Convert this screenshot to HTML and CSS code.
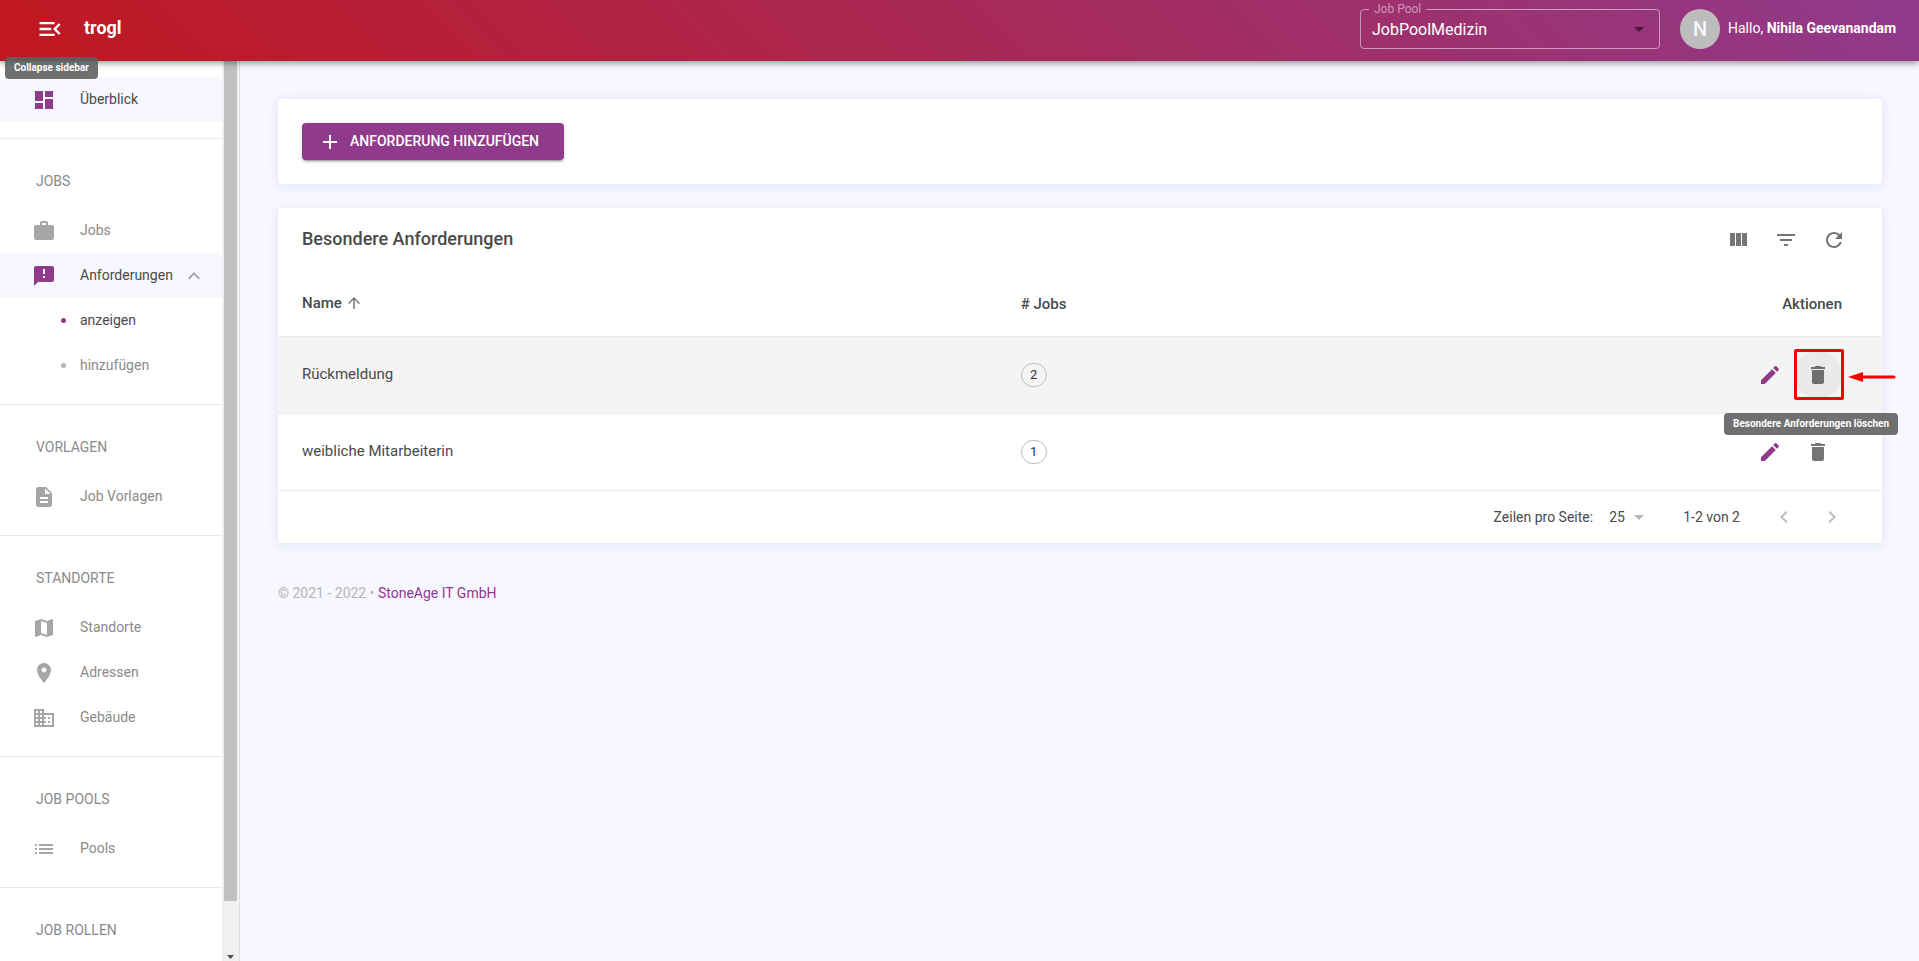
FILE: index.html
```html
<!DOCTYPE html>
<html lang="de">
<head>
<meta charset="utf-8">
<meta name="viewport" content="width=device-width, initial-scale=1">
<title>trogl – Besondere Anforderungen</title>
<link rel="stylesheet" href="styles.css">
</head>
<body>
<div class="app">
  <header class="topbar">
    <div class="menu-wrap">
      <button class="menu-btn" type="button" aria-label="Collapse sidebar">
        <svg viewBox="0 0 24 24" aria-hidden="true"><path d="M3 18h13v-2H3v2zm0-5h10v-2H3v2zm0-7v2h13V6H3zm18 9.590L17.420 12 21 8.410 19.590 7l-5 5 5 5L21 15.590z"/></svg>
      </button>
      <span class="tooltip tooltip-menu" role="tooltip">Collapse sidebar</span>
    </div>
    <a class="brand" href="#">trogl</a>
    <fieldset class="pool">
      <legend><label for="pool">Job Pool</label></legend>
      <select id="pool"><option>JobPoolMedizin</option></select>
      <svg class="caret" viewBox="0 0 24 24" aria-hidden="true"><path d="M7 10l5 5 5-5z"/></svg>
    </fieldset>
    <span class="avatar">N</span>
    <span class="greeting">Hallo, <b>Nihila Geevanandam</b></span>
  </header>

  <div class="body">
    <aside class="sidebar">
      <nav class="nav">
        <section class="group">
          <a class="item active" href="#"><svg viewBox="0 0 24 24" aria-hidden="true"><path d="M3 13h8V3H3v10zm0 8h8v-6H3v6zm10 0h8V11h-8v10zm0-18v6h8V3h-8z"/></svg>Überblick</a>
        </section>
        <section class="group">
          <h2 class="group-title">JOBS</h2>
          <a class="item" href="#"><svg viewBox="0 0 24 24" aria-hidden="true"><path d="M20 6h-4V4c0-1.110-.89-2-2-2h-4c-1.110 0-2 .89-2 2v2H4c-1.110 0-2 .89-2 2v11c0 1.110.89 2 2 2h16c1.110 0 2-.89 2-2V8c0-1.110-.89-2-2-2zm-6 0h-4V4h4v2z"/></svg>Jobs</a>
          <a class="item active" href="#"><svg viewBox="0 0 24 24" aria-hidden="true"><path d="M20 2H4c-1.100 0-1.990.9-1.990 2L2 22l4-4h14c1.100 0 2-.9 2-2V4c0-1.100-.9-2-2-2zm-7 12h-2v-2h2v2zm0-4h-2V5h2v5z"/></svg>Anforderungen
            <svg class="expand" viewBox="0 0 24 24" aria-hidden="true"><path d="M12 8l-6 6 1.410 1.410L12 10.830l4.590 4.580L18 14z"/></svg></a>
          <a class="item sub current" href="#"><span class="dot"></span>anzeigen</a>
          <a class="item sub" href="#"><span class="dot"></span>hinzufügen</a>
        </section>
        <section class="group">
          <h2 class="group-title">VORLAGEN</h2>
          <a class="item" href="#"><svg viewBox="0 0 24 24" aria-hidden="true"><path d="M14 2H6c-1.100 0-1.990.9-1.990 2L4 20c0 1.100.89 2 1.990 2H18c1.100 0 2-.9 2-2V8l-6-6zm2 16H8v-2h8v2zm0-4H8v-2h8v2zm-3-5V3.500L18.500 9H13z"/></svg>Job Vorlagen</a>
        </section>
        <section class="group">
          <h2 class="group-title">STANDORTE</h2>
          <a class="item" href="#"><svg viewBox="0 0 24 24" aria-hidden="true"><path d="M20.500 3l-.16.03L15 5.100 9 3 3.360 4.900c-.21.07-.36.25-.36.48V20.500c0 .28.22.5.5.5l.16-.03L9 18.900l6 2.100 5.640-1.900c.21-.07.36-.25.36-.48V3.500c0-.28-.22-.5-.5-.5zM15 19l-6-2.110V5l6 2.110V19z"/></svg>Standorte</a>
          <a class="item" href="#"><svg viewBox="0 0 24 24" aria-hidden="true"><path d="M12 2C8.130 2 5 5.130 5 9c0 5.250 7 13 7 13s7-7.750 7-13c0-3.870-3.130-7-7-7zm0 9.500c-1.380 0-2.500-1.120-2.500-2.500s1.120-2.500 2.500-2.500 2.500 1.120 2.500 2.500-1.120 2.500-2.500 2.500z"/></svg>Adressen</a>
          <a class="item" href="#"><svg viewBox="0 0 24 24" aria-hidden="true"><path d="M12 7V3H2v18h20V7H12zM6 19H4v-2h2v2zm0-4H4v-2h2v2zm0-4H4V9h2v2zm0-4H4V5h2v2zm4 12H8v-2h2v2zm0-4H8v-2h2v2zm0-4H8V9h2v2zm0-4H8V5h2v2zm10 12h-8v-2h2v-2h-2v-2h2v-2h-2V9h8v10zm-2-8h-2v2h2v-2zm0 4h-2v2h2v-2z"/></svg>Gebäude</a>
        </section>
        <section class="group">
          <h2 class="group-title">JOB POOLS</h2>
          <a class="item" href="#"><svg viewBox="0 0 24 24" aria-hidden="true"><path d="M3 13h2v-2H3v2zm0 4h2v-2H3v2zm0-8h2V7H3v2zm4 4h14v-2H7v2zm0 4h14v-2H7v2zM7 7v2h14V7H7z"/></svg>Pools</a>
        </section>
        <section class="group">
          <h2 class="group-title">JOB ROLLEN</h2>
        </section>
      </nav>
      <div class="scrollbar" aria-hidden="true"><div class="thumb"></div><svg viewBox="0 0 7 4" class="scroll-arrow"><path d="M0 0h7L3.500 4z"/></svg></div>
    </aside>

    <main class="main">
      <div class="card actions">
        <button class="add" type="button"><svg viewBox="0 0 24 24" aria-hidden="true"><path d="M19 13h-6v6h-2v-6H5v-2h6V5h2v6h6v2z"/></svg>ANFORDERUNG HINZUFÜGEN</button>
      </div>

      <section class="card">
        <div class="card-head">
          <h1>Besondere Anforderungen</h1>
          <button class="icon-btn" type="button" aria-label="Spalten"><svg viewBox="0 0 24 24" aria-hidden="true"><path d="M10 5h5v13h-5zM4 5h5v13H4zM16 5h5v13h-5z"/></svg></button>
          <button class="icon-btn" type="button" aria-label="Filter"><svg viewBox="0 0 24 24" aria-hidden="true"><path d="M10 18h4v-2h-4v2zM3 6v2h18V6H3zm3 7h12v-2H6v2z"/></svg></button>
          <button class="icon-btn" type="button" aria-label="Aktualisieren"><svg viewBox="0 0 24 24" aria-hidden="true"><path d="M17.650 6.350C16.200 4.900 14.210 4 12 4c-4.420 0-7.990 3.580-7.990 8s3.570 8 7.990 8c3.730 0 6.840-2.550 7.730-6h-2.080c-.82 2.330-3.040 4-5.650 4-3.310 0-6-2.690-6-6s2.690-6 6-6c1.660 0 3.140.69 4.220 1.780L13 11h7V4l-2.350 2.350z"/></svg></button>
        </div>
        <table class="table">
          <thead>
            <tr>
              <th class="col-name" scope="col"><span class="sort">Name <svg viewBox="0 0 24 24" aria-hidden="true"><path d="M4 12l1.410 1.410L11 7.830V20h2V7.830l5.580 5.590L20 12l-8-8-8 8z"/></svg></span></th>
              <th scope="col"># Jobs</th>
              <th class="col-actions" scope="col">Aktionen</th>
            </tr>
          </thead>
          <tbody>
            <tr class="hover">
              <td class="col-name">Rückmeldung</td>
              <td><span class="chip">2</span></td>
              <td class="col-actions"><div class="row-actions">
                <button class="icon-btn edit" type="button" aria-label="Bearbeiten"><svg viewBox="0 0 24 24" aria-hidden="true"><path d="M3 17.250V21h3.750L17.810 9.940l-3.750-3.750L3 17.250zM20.710 7.040c.39-.39.39-1.020 0-1.410l-2.340-2.340c-.39-.39-1.020-.39-1.410 0l-1.830 1.830 3.750 3.750 1.830-1.830z"/></svg></button>
                <div class="marked">
                  <button class="icon-btn focus" type="button" aria-label="Löschen"><svg viewBox="0 0 24 24" aria-hidden="true"><path d="M6 19c0 1.100.9 2 2 2h8c1.100 0 2-.9 2-2V7H6v12zM19 4h-3.500l-1-1h-5l-1 1H5v2h14V4z"/></svg></button>
                  <span class="mark-box"></span>
                  <svg class="mark-arrow" viewBox="0 0 48 10" aria-hidden="true"><path d="M0 5L15 0V10z"/><path d="M14 5H46" stroke="#f00" stroke-width="3" stroke-linecap="round"/></svg>
                  <span class="tooltip tooltip-delete" role="tooltip">Besondere Anforderungen löschen</span>
                </div>
              </div></td>
            </tr>
            <tr>
              <td class="col-name">weibliche Mitarbeiterin</td>
              <td><span class="chip">1</span></td>
              <td class="col-actions"><div class="row-actions">
                <button class="icon-btn edit" type="button" aria-label="Bearbeiten"><svg viewBox="0 0 24 24" aria-hidden="true"><path d="M3 17.250V21h3.750L17.810 9.940l-3.750-3.750L3 17.250zM20.710 7.040c.39-.39.39-1.020 0-1.410l-2.340-2.340c-.39-.39-1.020-.39-1.410 0l-1.830 1.830 3.750 3.750 1.830-1.830z"/></svg></button>
                <button class="icon-btn" type="button" aria-label="Löschen"><svg viewBox="0 0 24 24" aria-hidden="true"><path d="M6 19c0 1.100.9 2 2 2h8c1.100 0 2-.9 2-2V7H6v12zM19 4h-3.500l-1-1h-5l-1 1H5v2h14V4z"/></svg></button>
              </div></td>
            </tr>
          </tbody>
        </table>
        <div class="pager">
          <label for="rows">Zeilen pro Seite:</label>
          <span class="rows"><select id="rows"><option>25</option></select><svg viewBox="0 0 24 24" aria-hidden="true"><path d="M7 10l5 5 5-5z"/></svg></span>
          <span class="range">1-2 von 2</span>
          <button class="icon-btn" type="button" aria-label="Vorherige Seite" disabled><svg viewBox="0 0 24 24" aria-hidden="true"><path d="M15.410 7.410L14 6l-6 6 6 6 1.410-1.410L10.830 12z"/></svg></button>
          <button class="icon-btn" type="button" aria-label="Nächste Seite" disabled><svg viewBox="0 0 24 24" aria-hidden="true"><path d="M10 6L8.590 7.410 13.170 12l-4.580 4.590L10 18l6-6z"/></svg></button>
        </div>
      </section>

      <footer class="foot">© 2021 - 2022 • <a href="#">StoneAge IT GmbH</a></footer>
    </main>
  </div>
</div>
</body>
</html>
```
FILE: styles.css
```css
* { box-sizing: border-box; }

:root {
  --purple: #903a8c;
  --text: #4a4a4a;
  --muted: #8a8a8a;
  --icon: #757575;
  --line: #ebebeb;
  --page: #f6f7ff;
}

body {
  margin: 0;
  background: var(--page);
  color: var(--text);
  font: 14px/20px Roboto, "Noto Sans", sans-serif;
}

button, select { font: inherit; color: inherit; border: 0; margin: 0; }
a { color: inherit; text-decoration: none; }
svg { display: block; fill: currentColor; flex: none; }

.app { height: 100vh; display: flex; flex-direction: column; overflow: hidden; }

/* Top bar */
.topbar {
  position: relative;
  z-index: 2;
  flex: none;
  display: flex;
  align-items: center;
  height: 61px;
  padding: 0 18px 4px 36px;
  color: #fff;
  background: linear-gradient(45deg, #c1171f, #903a8c);
  box-shadow: 0 2px 4px -1px rgba(0,0,0,.2), 0 4px 5px rgba(0,0,0,.14), 0 1px 10px rgba(0,0,0,.12);
}
.menu-wrap { position: relative; }
.menu-btn { display: block; padding: 0; background: none; }
.menu-btn svg { width: 28px; height: 28px; }
.brand { margin-left: 20px; padding-bottom: 2px; font-size: 18px; line-height: 24px; font-weight: 700; }
.pool {
  position: relative;
  flex: none;
  width: 300px;
  height: 46px;
  margin: 0 20px 5px auto;
  padding: 0;
  border: 1px solid rgba(255,255,255,.5);
  border-radius: 4px;
}
.pool legend {
  margin-left: 8px;
  padding: 0 5px;
  font-size: 12px;
  line-height: 12px;
  color: rgba(255,255,255,.5);
}
.pool select {
  display: block;
  width: 100%;
  height: 30px;
  padding: 0 40px 0 11px;
  appearance: none;
  background: none;
  font-size: 16px;
}
.caret { position: absolute; right: 8px; top: 2px; width: 24px; height: 24px; color: rgba(0,0,0,.54); pointer-events: none; }
.avatar {
  width: 40px;
  height: 40px;
  margin-right: 8px;
  border-radius: 50%;
  background: #bdbdbd;
  color: #f6f7ff;
  font-size: 20px;
  line-height: 40px;
  font-weight: 500;
  text-align: center;
}
.greeting { min-width: 173px; padding-bottom: 2px; }
.greeting b { font-weight: 700; }

.tooltip {
  position: absolute;
  padding: 4px 9px;
  border-radius: 4px;
  background: rgba(97,97,97,.9);
  color: #fff;
  font-size: 10px;
  line-height: 14px;
  font-weight: 700;
  white-space: nowrap;
}
.tooltip-menu { left: -31px; top: 42px; }
.tooltip-delete { right: -56px; top: 62px; z-index: 1; }

/* Sidebar */
.body { flex: 1; min-height: 0; display: flex; }
.sidebar { flex: none; width: 240px; display: flex; background: #fff; border-right: 1px solid #e0e0e0; overflow: hidden; }
.nav { flex: 1; min-width: 0; overflow: hidden; }
.group { padding: 16px 0; border-bottom: 1px solid #e8e8e8; }
.group-title { margin: 0; padding: 0 36px; font-size: 14px; line-height: 53px; font-weight: 400; color: var(--muted); }
.item { display: flex; align-items: center; height: 45px; padding: 0 16px 2px 32px; color: var(--muted); }
.item svg { width: 24px; height: 24px; margin: 2px 24px 0 0; color: #a6a6a6; }
.item.active { background: var(--page); color: var(--text); }
.item.active svg { color: var(--purple); }
.item svg.expand { margin: 2px 0 0 auto; }
.item.active svg.expand { color: #a6a6a6; }
.item.sub { padding-left: 61px; }
.dot { width: 5px; height: 5px; margin: 2px 14px 0 0; border-radius: 50%; background: #b5b5b5; }
.current { color: var(--text); }
.current .dot { background: var(--purple); }
.scrollbar { flex: none; width: 17px; padding: 0 2px 2px; display: flex; flex-direction: column; align-items: center; justify-content: space-between; background: #f1f1f1; }
.thumb { width: 13px; height: calc(100% - 58px); background: #c1c1c1; }
.scroll-arrow { width: 7px; height: 4px; color: #505050; }

/* Content */
.main { flex: 1; min-width: 0; padding: 38px 37px 0 38px; overflow: hidden; }
.card { margin-bottom: 24px; border-radius: 4px; background: #fff; box-shadow: 0 2px 12px rgba(80,80,220,.12); }
.actions { padding: 24px; }
.add {
  display: flex;
  align-items: center;
  gap: 8px;
  min-width: 262px;
  height: 37px;
  padding: 0 16px 2px;
  border-radius: 4px;
  background: var(--purple);
  color: #fff;
  font-weight: 500;
  box-shadow: 0 3px 1px -2px rgba(0,0,0,.2), 0 2px 2px rgba(0,0,0,.14), 0 1px 5px rgba(0,0,0,.12);
}
.add svg { width: 24px; height: 24px; margin-top: 2px; }
.card-head { display: flex; align-items: center; height: 64px; padding: 0 24px; }
.card-head h1 { flex: 1; margin: 0; padding-bottom: 2px; font-size: 18px; line-height: 24px; font-weight: 500; }
.icon-btn {
  display: flex;
  align-items: center;
  justify-content: center;
  width: 48px;
  height: 48px;
  padding: 0;
  border-radius: 50%;
  background: none;
  color: var(--icon);
}
.icon-btn svg { width: 24px; height: 24px; }
.icon-btn:disabled { color: #bdbdbd; }
.edit { color: var(--purple); }

.table { width: 100%; table-layout: fixed; border-collapse: separate; border-spacing: 0; font-size: 15px; }
.table th { height: 65px; font-weight: 500; text-align: left; }
.table th, .table td { padding: 0 24px 0 0; border-bottom: 1px solid var(--line); }
.table .col-name { width: 46.3%; padding: 0 0 2px 24px; }
.table td { height: 77px; }
.table .col-actions { padding-right: 40px; text-align: right; }
.sort { display: flex; align-items: center; gap: 3px; }
.sort svg { width: 18px; height: 18px; color: var(--icon); }
.hover { background: #f4f4f4; }
.chip {
  display: block;
  width: 26px;
  height: 24px;
  border: 1px solid #bdbdbd;
  border-radius: 12px;
  font-size: 13px;
  line-height: 22px;
  text-align: center;
  color: #303030;
}
.row-actions { display: flex; justify-content: flex-end; }
.marked { position: relative; }
.focus { background: #eaeaea; color: #6e6e6e; }
.mark-box { position: absolute; inset: -2px -2px -1px 0; border: 3px solid #f00; border-radius: 2px; }
.mark-arrow { position: absolute; left: 54px; top: 21px; width: 48px; height: 10px; color: #f00; }

.pager { display: flex; align-items: center; justify-content: flex-end; height: 52px; padding-right: 26px; }
.rows { display: flex; align-items: center; margin: 0 32px 0 16px; }
.rows select { width: 18px; padding: 0; appearance: none; background: none; }
.rows svg { width: 24px; height: 24px; color: #b5b5b5; }
.range { margin-right: 20px; }

.foot { padding-top: 16px; color: #b5b5b5; }
.foot a { color: var(--purple); }
```
